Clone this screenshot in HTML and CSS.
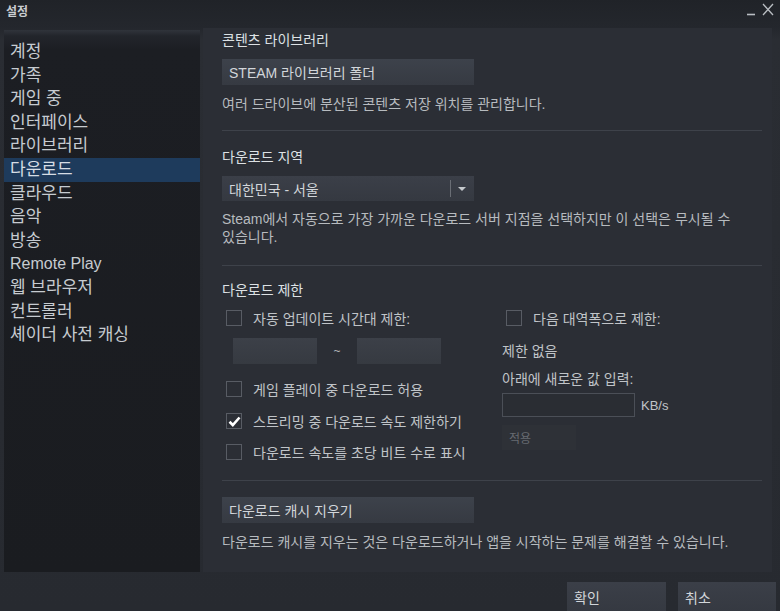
FILE: index.html
```html
<!DOCTYPE html>
<html lang="ko">
<head>
<meta charset="utf-8">
<title>설정</title>
<link rel="stylesheet" href="styles.css">
</head>
<body>
<div class="window">
  <div class="titlebar">
    <span class="title">설정</span>
    <div class="winctl">
      <svg width="30" height="16" viewBox="0 0 30 16">
        <path d="M1 13.5 H9" stroke="#b9bdc2" stroke-width="1.6" fill="none"/>
        <path d="M17 3 L27 14 M27 3 L17 14" stroke="#b9bdc2" stroke-width="1.3" fill="none"/>
      </svg>
    </div>
  </div>
  <div class="body">
    <nav class="sidebar">
      <div class="nav-item">계정</div>
      <div class="nav-item">가족</div>
      <div class="nav-item">게임 중</div>
      <div class="nav-item">인터페이스</div>
      <div class="nav-item">라이브러리</div>
      <div class="nav-item active">다운로드</div>
      <div class="nav-item">클라우드</div>
      <div class="nav-item">음악</div>
      <div class="nav-item">방송</div>
      <div class="nav-item latin">Remote Play</div>
      <div class="nav-item">웹 브라우저</div>
      <div class="nav-item">컨트롤러</div>
      <div class="nav-item">셰이더 사전 캐싱</div>
    </nav>
    <main class="panel">
      <div class="heading h-first">콘텐츠 라이브러리</div>
      <div class="btn wide btn-lib">STEAM 라이브러리 폴더</div>
      <div class="desc d-lib">여러 드라이브에 분산된 콘텐츠 저장 위치를 관리합니다.</div>
      <div class="sep s-1"></div>

      <div class="heading h-region">다운로드 지역</div>
      <div class="dropdown">
        <span class="dd-text">대한민국 - 서울</span>
        <span class="dd-div"></span>
        <span class="dd-arrow"></span>
      </div>
      <div class="desc desc2">Steam에서 자동으로 가장 가까운 다운로드 서버 지점을 선택하지만 이 선택은 무시될 수 있습니다.</div>
      <div class="sep s-2"></div>

      <div class="heading h-limit">다운로드 제한</div>
      <div class="limits">
        <div class="col-left">
          <label class="cb-row r-1"><span class="cb"></span><span>자동 업데이트 시간대 제한:</span></label>
          <div class="times">
            <span class="time-box"></span>
            <span class="tilde">~</span>
            <span class="time-box"></span>
          </div>
          <label class="cb-row r-2"><span class="cb"></span><span>게임 플레이 중 다운로드 허용</span></label>
          <label class="cb-row r-3"><span class="cb checked"><svg width="13" height="11" viewBox="0 0 13 11"><path d="M1.5 5.8 L4.8 9 L11.5 1.5" stroke="#ffffff" stroke-width="2.6" fill="none"/></svg></span><span>스트리밍 중 다운로드 속도 제한하기</span></label>
          <label class="cb-row r-4"><span class="cb"></span><span>다운로드 속도를 초당 비트 수로 표시</span></label>
        </div>
        <div class="col-right">
          <label class="cb-row r-1"><span class="cb"></span><span>다음 대역폭으로 제한:</span></label>
          <div class="plain p-none">제한 없음</div>
          <div class="plain p-new">아래에 새로운 값 입력:</div>
          <div class="kb-row">
            <span class="kb-input"></span>
            <span class="kb-unit">KB/s</span>
          </div>
          <div class="apply">적용</div>
        </div>
      </div>
      <div class="sep s-3"></div>

      <div class="btn wide btn-cache">다운로드 캐시 지우기</div>
      <div class="desc d-cache">다운로드 캐시를 지우는 것은 다운로드하거나 앱을 시작하는 문제를 해결할 수 있습니다.</div>
    </main>
  </div>
  <div class="footer">
    <div class="btn foot-btn ok">확인</div>
    <div class="btn foot-btn cancel">취소</div>
  </div>
</div>
</body>
</html>
```

FILE: styles.css
```css
* { box-sizing: border-box; }

html, body {
  margin: 0;
  padding: 0;
  background: #26292f;
}

body {
  font-family: "Liberation Sans", "Noto Sans CJK KR", sans-serif;
  color: #c4c8cc;
  width: 780px;
  height: 611px;
  overflow: hidden;
  word-break: keep-all;
}

.window {
  width: 780px;
  height: 611px;
  display: flex;
  flex-direction: column;
  background: linear-gradient(#202328 0px, #24272d 28px, #2a2d33 40px, #272a30 100%);
}

.titlebar {
  height: 29px;
  flex: none;
  display: flex;
  justify-content: space-between;
  align-items: flex-start;
}

.title {
  font-size: 12px;
  font-weight: bold;
  color: #c9cdd1;
  margin: 4px 0 0 6px;
  line-height: 16px;
}

.winctl {
  margin: 1px 4px 0 0;
}

.body {
  height: 543px;
  flex: none;
  display: flex;
  padding-left: 4px;
  padding-right: 8px;
  gap: 3px;
}

.sidebar {
  width: 196px;
  flex: none;
  background: linear-gradient(#30343b 0px, #22252b 6px, #1c1e23 20px, #1a1c20 100%);
  padding-top: 10px;
  margin-top: 1px;
}

.nav-item {
  font-size: 17px;
  line-height: 23.6px;
  height: 23.6px;
  padding-left: 6px;
  color: #c6cbd0;
  white-space: nowrap;
}

.nav-item.latin {
  font-size: 16px;
}

.nav-item.active {
  background: #1e3b5c;
  color: #d6dde4;
}

.panel {
  flex: 1;
  background: #2b2e35;
  padding: 4px 10px 0 19px;
  display: flex;
  flex-direction: column;
  margin-top: -1px;
}

.heading {
  font-size: 14px;
  line-height: 16px;
  color: #dde1e4;
}

.h-region { margin-top: 18px; }
.h-limit { margin-top: 16px; }

.btn {
  background: linear-gradient(#3d424b, #363a42);
  color: #d2d6da;
  font-size: 14px;
  display: flex;
  align-items: center;
  padding-left: 7px;
}

.wide {
  width: 252px;
  height: 26px;
}

.btn-lib { margin-top: 11px; }
.btn-cache { margin-top: 16px; }

.desc {
  font-size: 14px;
  line-height: 18px;
  color: #b7bbbf;
}

.d-lib { margin-top: 10px; }
.desc2 { margin-top: 9px; padding-right: 10px; }
.d-cache { margin-top: 10px; }

.sep {
  height: 1px;
  background: #3e424a;
  flex: none;
}

.s-1 { margin-top: 17px; }
.s-2 { margin-top: 19px; }
.s-3 { margin-top: 19px; }

.dropdown {
  margin-top: 11px;
  width: 252px;
  height: 25px;
  background: linear-gradient(#3b3f48, #353941);
  display: flex;
  align-items: center;
  padding-left: 7px;
  font-size: 14px;
  color: #d2d6da;
}

.dd-text { flex: 1; }

.dd-div {
  width: 1px;
  height: 17px;
  background: #6a6e75;
  margin-right: 7px;
}

.dd-arrow {
  width: 0;
  height: 0;
  border-left: 4px solid transparent;
  border-right: 4px solid transparent;
  border-top: 4px solid #c5c9cd;
  margin-right: 8px;
}

.limits {
  display: flex;
}

.col-left {
  width: 280px;
  flex: none;
  display: flex;
  flex-direction: column;
}

.col-right {
  flex: 1;
  display: flex;
  flex-direction: column;
}

.cb-row {
  display: flex;
  align-items: center;
  height: 18px;
  font-size: 14px;
  color: #c0c4c8;
  white-space: nowrap;
}

.cb {
  width: 16px;
  height: 16px;
  border: 1px solid #585c64;
  margin-left: 4px;
  margin-right: 11px;
  display: flex;
  align-items: center;
  justify-content: center;
  flex: none;
}

.r-1 { margin-top: 11px; }
.r-2 { margin-top: 16px; }
.r-3 { margin-top: 14px; }
.r-4 { margin-top: 13px; }

.times {
  margin-top: 11px;
  display: flex;
  align-items: center;
  padding-left: 11px;
  height: 26px;
}

.time-box {
  width: 84px;
  height: 26px;
  background: linear-gradient(#3c4048, #363a41);
}

.tilde {
  width: 40px;
  text-align: center;
  font-size: 12px;
  color: #b0b4b8;
}

.plain {
  font-size: 14px;
  line-height: 16px;
  color: #c0c4c8;
}

.p-none { margin-top: 16px; }
.p-new { margin-top: 12px; }

.kb-row {
  margin-top: 6px;
  display: flex;
  align-items: center;
}

.kb-input {
  width: 133px;
  height: 24px;
  border: 1px solid #4b4f57;
  background: #2a2d33;
}

.kb-unit {
  margin-left: 6px;
  font-size: 13px;
  color: #c0c4c8;
}

.apply {
  margin-top: 8px;
  width: 74px;
  height: 25px;
  background: #2e3137;
  color: #676b71;
  font-size: 12px;
  display: flex;
  align-items: center;
  padding-left: 7px;
}

.footer {
  flex: 1;
  display: flex;
  justify-content: flex-end;
  align-items: flex-start;
  gap: 12px;
  padding-top: 10px;
  padding-right: 4px;
}

.foot-btn {
  height: 30px;
  background: linear-gradient(#3b3f48, #353941);
}

.ok { width: 99px; }
.cancel { width: 98px; }
```
